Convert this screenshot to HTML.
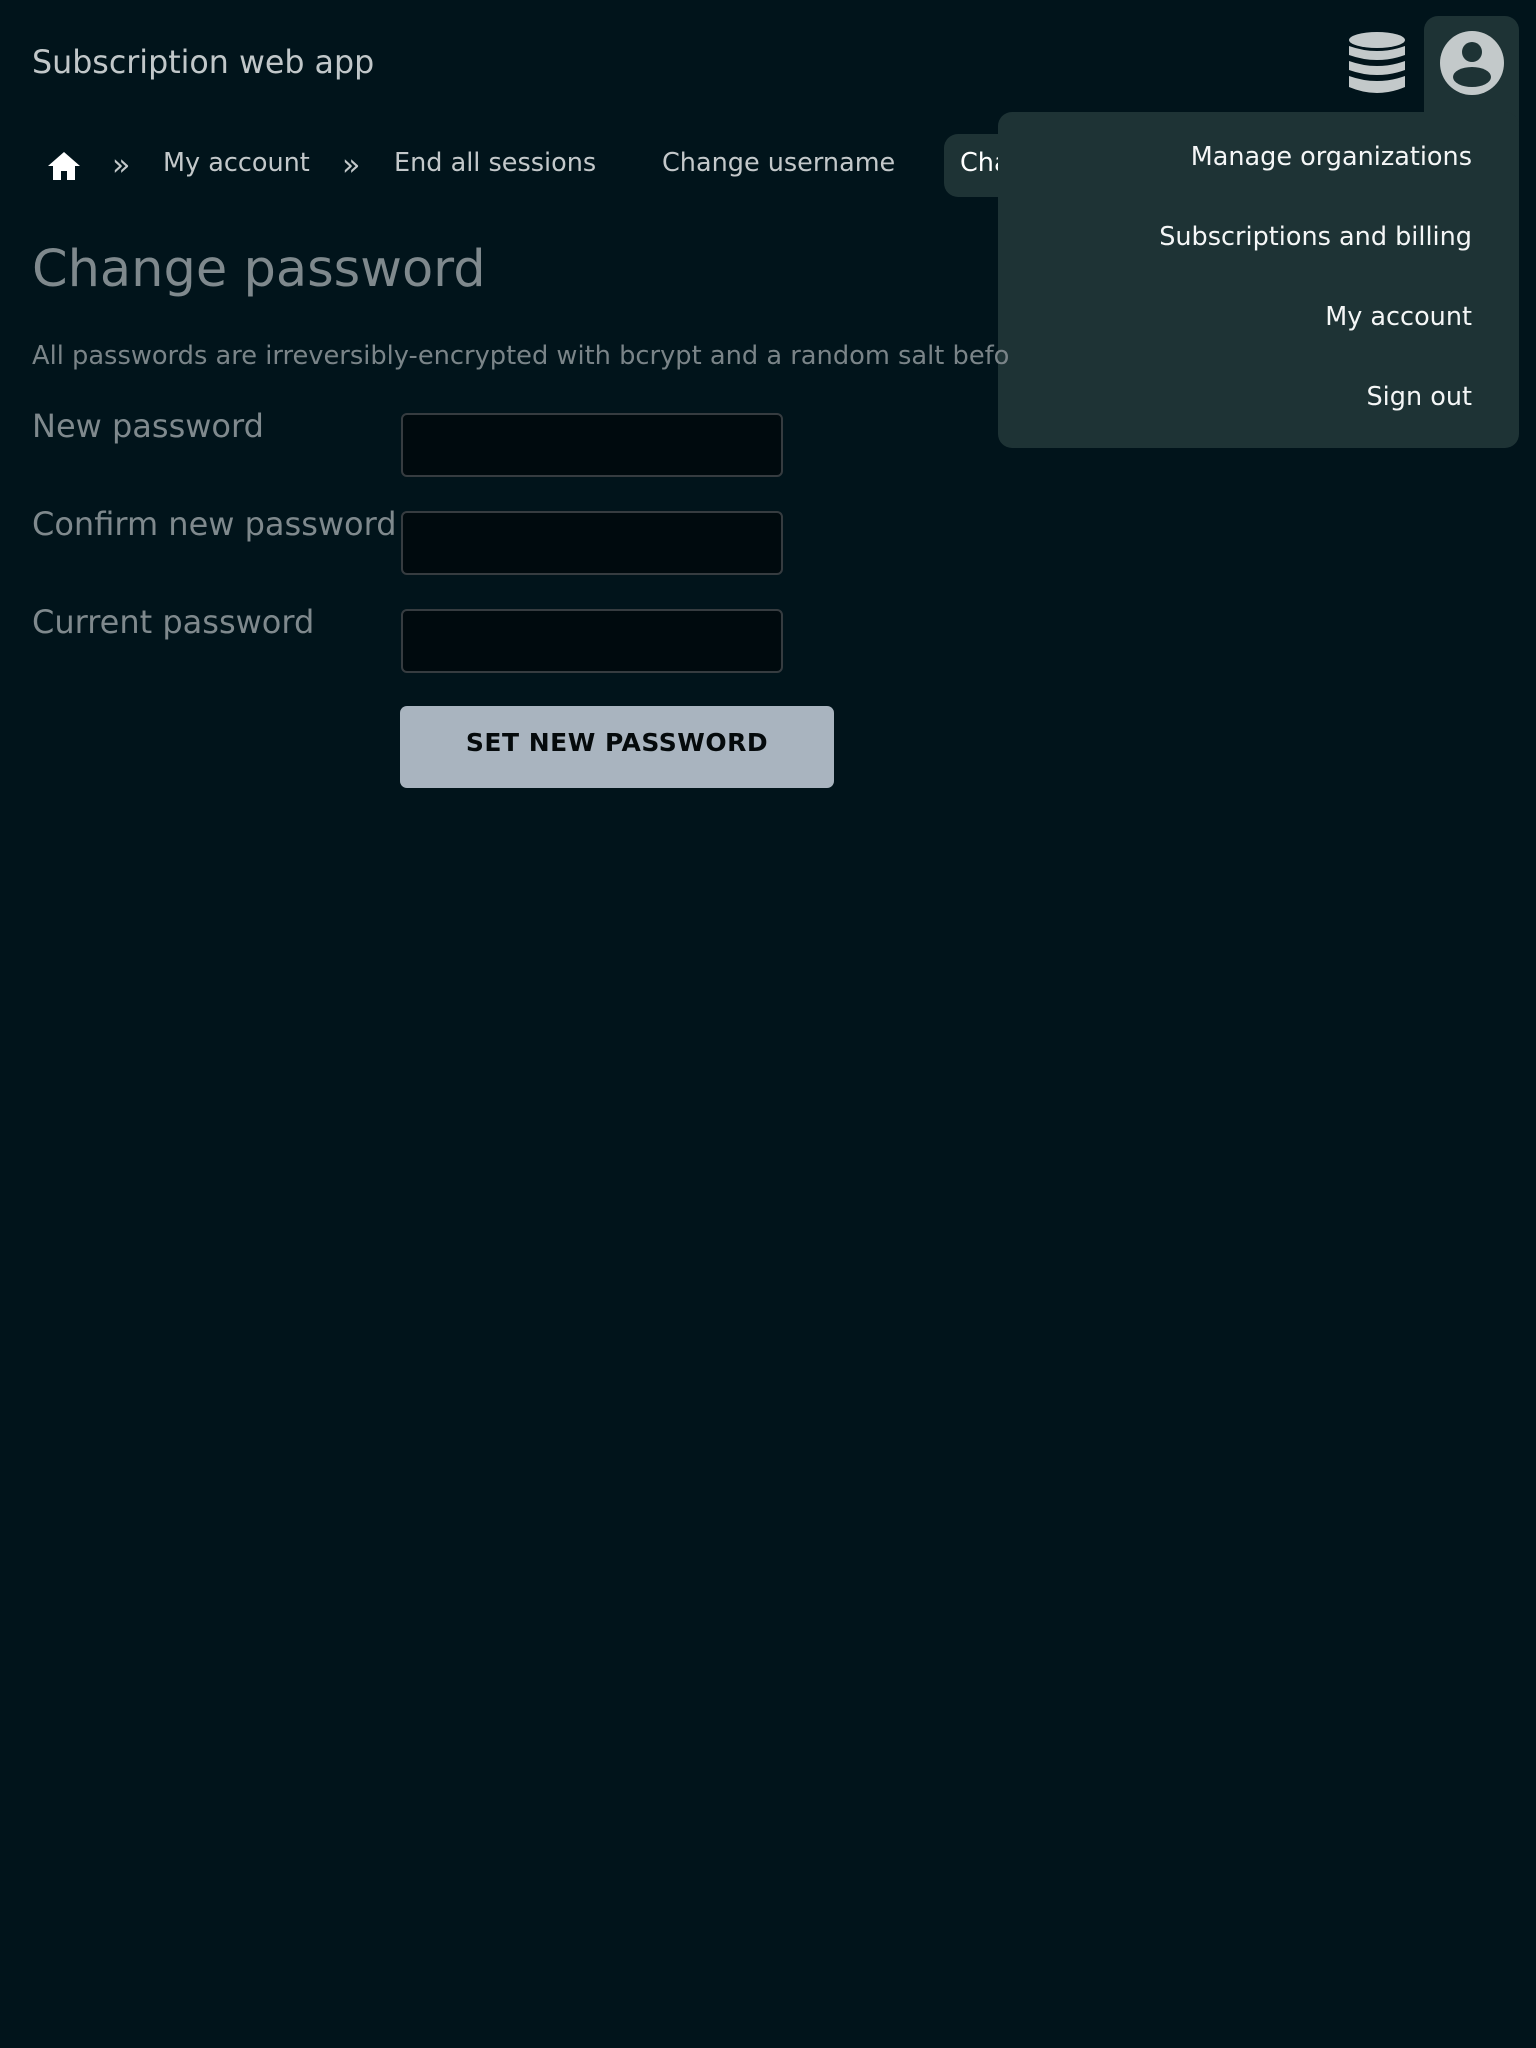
<!DOCTYPE html>
<html><head><meta charset="utf-8"><style>
*{margin:0;padding:0;box-sizing:border-box}
body{width:1536px;height:2048px;background:#01141b;font-family:"DejaVu Sans","Liberation Sans",sans-serif;position:relative;overflow:hidden}
.a{position:absolute;white-space:nowrap}
.title{left:32px;top:44px;font-size:31.7px;color:#c1c7c9;line-height:38px}
.bc{top:148px;font-size:25.5px;color:#c3c8ca;line-height:30px}
.h1{left:32px;top:238px;font-size:51px;color:#7f898d;line-height:64px}
.p{left:32px;top:341px;font-size:25.7px;color:#7a8488;line-height:30px}
.lbl{left:32px;font-size:32px;color:#7f898d;line-height:40px}
.inp{left:401px;width:382px;height:64px;background:#000a0e;border:2px solid #363c40;border-radius:6px}
.btn{left:400px;top:706px;width:434px;height:82px;background:#a9b4bf;border-radius:7px;font-weight:bold;font-size:25px;color:#050a0c;text-align:center;line-height:74px;letter-spacing:0.5px}
.avbg{left:1424px;top:16px;width:95px;height:110px;background:#1e3335;border-radius:14px 14px 0 0}
.mi{right:64px;font-size:25.5px;color:#f4f6f6;line-height:30px}
</style></head><body>
<div class="a title">Subscription web app</div>

<svg class="a" style="left:1348px;top:31px" width="58" height="66" viewBox="0 0 58 66">
<g fill="#c3c9ca">
<ellipse cx="29" cy="9" rx="28" ry="8"/>
<path d="M1 15 Q29 25 57 15 V24 Q29 34 1 24Z"/>
<path d="M1 30 Q29 40 57 30 V39 Q29 49 1 39Z"/>
<path d="M1 45 Q29 55 57 45 V56 Q29 68 1 56Z"/>
</g></svg>

<div class="a avbg"></div>
<svg class="a" style="left:1440px;top:31px" width="64" height="64" viewBox="0 0 64 64">
<circle cx="32" cy="32" r="32" fill="#c3c9ca"/>
<circle cx="32" cy="21" r="10" fill="#1e3335"/>
<ellipse cx="32" cy="46" rx="19" ry="10" fill="#1e3335"/>
</svg>

<svg class="a" style="left:48px;top:152px" width="32" height="28" viewBox="0 0 32 28">
<path d="M16 0 L32 14 H27 V28 H19 V19 H13 V28 H5 V14 H0Z" fill="#fff"/>
</svg>
<div class="a bc" style="left:112px;font-size:30px;top:151px">»</div>
<div class="a bc" style="left:163px">My account</div>
<div class="a bc" style="left:342px;font-size:30px;top:151px">»</div>
<div class="a bc" style="left:394px">End all sessions</div>
<div class="a bc" style="left:662px">Change username</div>
<div class="a" style="left:944px;top:134px;width:60px;height:63px;background:#1e3335;border-radius:14px 0 0 14px"></div>
<div class="a bc" style="left:960px;color:#fff">Cha</div>
<div class="a" style="left:998px;top:112px;width:521px;height:336px;background:#1e3335;border-radius:14px"></div>

<div class="a mi" style="top:142px">Manage organizations</div>
<div class="a mi" style="top:222px">Subscriptions and billing</div>
<div class="a mi" style="top:302px">My account</div>
<div class="a mi" style="top:382px">Sign out</div>

<div class="a h1">Change password</div>
<div class="a p">All passwords are irreversibly-encrypted with bcrypt and a random salt befo</div>

<div class="a lbl" style="top:406px">New password</div>
<div class="a lbl" style="top:504px">Confirm new password</div>
<div class="a lbl" style="top:602px">Current password</div>
<div class="a inp" style="top:413px"></div>
<div class="a inp" style="top:511px"></div>
<div class="a inp" style="top:609px"></div>
<div class="a btn">SET NEW PASSWORD</div>
</body></html>
